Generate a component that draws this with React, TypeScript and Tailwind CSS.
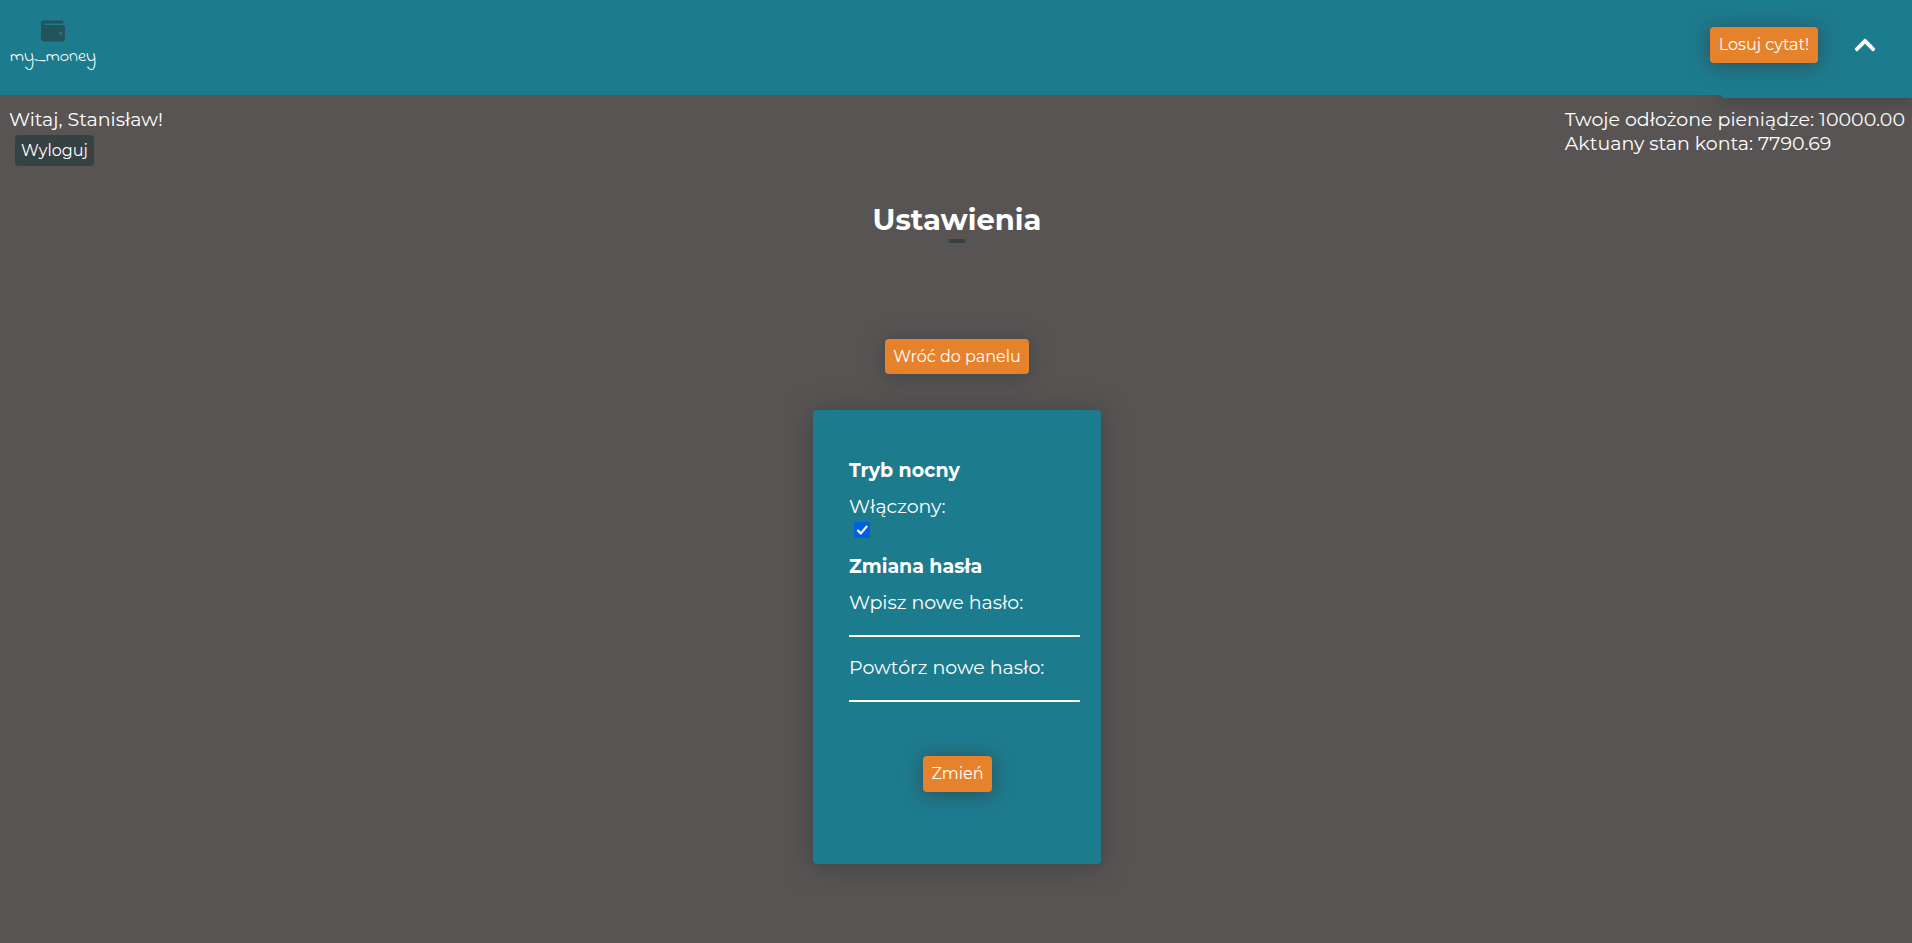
import { useState } from "react";
import type { ButtonHTMLAttributes } from "react";
import { FaChevronUp, FaWallet } from "react-icons/fa";

function AccentButton({ className = "", ...props }: ButtonHTMLAttributes<HTMLButtonElement>) {
  return (
    <button
      type="button"
      className={`cursor-pointer rounded bg-[#e6822c] text-base text-white shadow-[0_2px_20px_rgba(52,63,72,0.75)] ${className}`}
      {...props}
    />
  );
}

function PasswordField({ id, label }: { id: string; label: string }) {
  return (
    <div className="flex flex-col">
      <label htmlFor={id} className="leading-6">
        {label}
      </label>
      <input
        id={id}
        type="password"
        className="h-[22px] w-full border-b-2 border-white bg-transparent text-base outline-none"
      />
    </div>
  );
}

export default function App() {
  const [night, setNight] = useState(true);

  return (
    <div className="flex min-h-screen flex-col bg-[#585453] font-['Montserrat','Inter',sans-serif] text-[19px] leading-6 text-white">
      <header className="relative z-10">
        <div className="absolute right-0 -bottom-[3px] h-12 w-[10%] rounded-bl bg-[#1d7b8e] shadow-[0_2px_20px_rgba(58,63,70,0.9)]" />
        <div className="relative flex h-[95px] items-start justify-between bg-[#1d7b8e]">
          <a href="#" className="ml-2.5 flex flex-col items-center pt-[19px]">
            <FaWallet className="size-6 text-[#22545a]" />
            <span className="font-['Indie_Flower','Inter',cursive] text-lg leading-7">
              my_money
            </span>
          </a>
          <div className="flex items-center pt-[27px] pr-[35px]">
            <AccentButton className="h-9 w-[108px]">Losuj cytat!</AccentButton>
            <button type="button" aria-label="Menu" className="ml-[35px] cursor-pointer">
              <FaChevronUp className="size-6" />
            </button>
          </div>
        </div>
      </header>

      <div className="flex items-start justify-between pt-[13px] pr-[7px] pl-[9px]">
        <div className="flex flex-col items-start">
          <p>Witaj, Stanisław!</p>
          <button
            type="button"
            className="mt-[3px] ml-1.5 h-[31px] w-[79px] cursor-pointer rounded bg-[#364143] text-base"
          >
            Wyloguj
          </button>
        </div>
        <div>
          <p>Twoje odłożone pieniądze: 10000.00</p>
          <p>Aktuany stan konta: 7790.69</p>
        </div>
      </div>

      <main className="flex flex-col items-center pl-0.5">
        <h1 className="mt-9 text-[29px] leading-9 font-bold">Ustawienia</h1>
        <div className="mt-px h-1 w-4 bg-[#364143]" />
        <AccentButton className="mt-24 h-[35px] w-36">Wróć do panelu</AccentButton>

        <form className="mt-9 flex w-72 flex-col rounded bg-[#1d7b8e] pt-[49px] pr-[21px] pb-[72px] pl-9 shadow-[0_2px_25px_rgba(58,63,70,0.9)]">
          <h2 className="font-bold">Tryb nocny</h2>
          <label htmlFor="night" className="mt-3">
            Włączony:
          </label>
          <div className="mt-[3px] ml-[5px] grid size-4">
            <input
              id="night"
              type="checkbox"
              checked={night}
              onChange={(e) => setNight(e.target.checked)}
              className="peer col-start-1 row-start-1 size-4 appearance-none rounded-xs bg-white checked:bg-[#0060df]"
            />
            <svg
              viewBox="0 0 16 16"
              className="pointer-events-none col-start-1 row-start-1 hidden size-4 peer-checked:block"
              fill="none"
              stroke="white"
              strokeWidth="2.2"
              strokeLinecap="round"
              strokeLinejoin="round"
            >
              <path d="M4 8.6 6.8 11.4 12.6 4.6" />
            </svg>
          </div>

          <h2 className="mt-[17px] font-bold">Zmiana hasła</h2>
          <div className="mt-3 flex flex-col gap-[19px]">
            <PasswordField id="password" label="Wpisz nowe hasło:" />
            <PasswordField id="password-repeat" label="Powtórz nowe hasło:" />
          </div>
          <AccentButton className="mt-[54px] mr-3.5 h-9 w-[69px] self-center">Zmień</AccentButton>
        </form>
      </main>
    </div>
  );
}
